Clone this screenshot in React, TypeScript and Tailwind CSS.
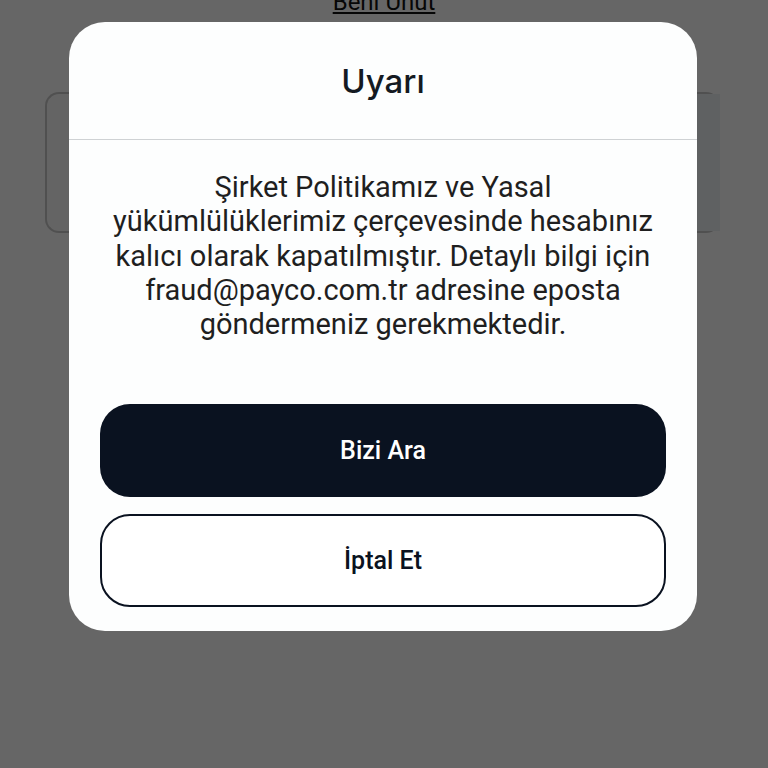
import React from 'react';

const App: React.FC = () => {
  return (
    <div className="relative h-[768px] w-[768px] overflow-hidden bg-white" style={{ fontFamily: 'Roboto, sans-serif' }}>
      {/* Page behind the dialog */}
      <div className="flex flex-col items-center">
        <span className="-mt-[16px] text-[24px] text-[#111] underline">Beni Unut</span>
        <div className="ml-[45px] mt-[72px] flex h-[141px] w-[675px] self-start rounded-[14px] border-2 border-r-0 border-[#c9c9c9] bg-[#fafafa]">
          <div className="ml-auto w-[24px] bg-[#eef2f6]" />
        </div>
      </div>

      {/* Overlay */}
      <div className="absolute inset-0 bg-black/60">
        <div className="ml-[69px] mt-[22px] w-[628px] rounded-[36px] bg-[#fdfefe] pb-[24px]">
          <div className="flex h-[118px] items-center justify-center border-b border-[#cfd2d4]">
            <h1 className="mt-[2px] text-[33px] font-medium text-[#141a22]" style={{ fontFamily: 'Inter, sans-serif' }}>
              Uyarı
            </h1>
          </div>
          <p className="mx-auto mt-[30px] w-[570px] text-center text-[29px] leading-[34.3px] text-[#1f1f1f]">
            Şirket Politikamız ve Yasal yükümlülüklerimiz çerçevesinde hesabınız kalıcı olarak kapatılmıştır. Detaylı
            bilgi için fraud@payco.com.tr adresine eposta göndermeniz gerekmektedir.
          </p>
          <div className="mt-[63px] flex flex-col gap-[17px] px-[31px]">
            <button className="flex h-[93px] items-center justify-center rounded-[30px] bg-[#0a1220] text-[25px] font-medium text-white">
              Bizi Ara
            </button>
            <button className="flex h-[93px] items-center justify-center rounded-[30px] border-2 border-[#0a1220] bg-white text-[25px] font-medium text-[#0a1220]">
              İptal Et
            </button>
          </div>
        </div>
      </div>
    </div>
  );
};

export default App;
